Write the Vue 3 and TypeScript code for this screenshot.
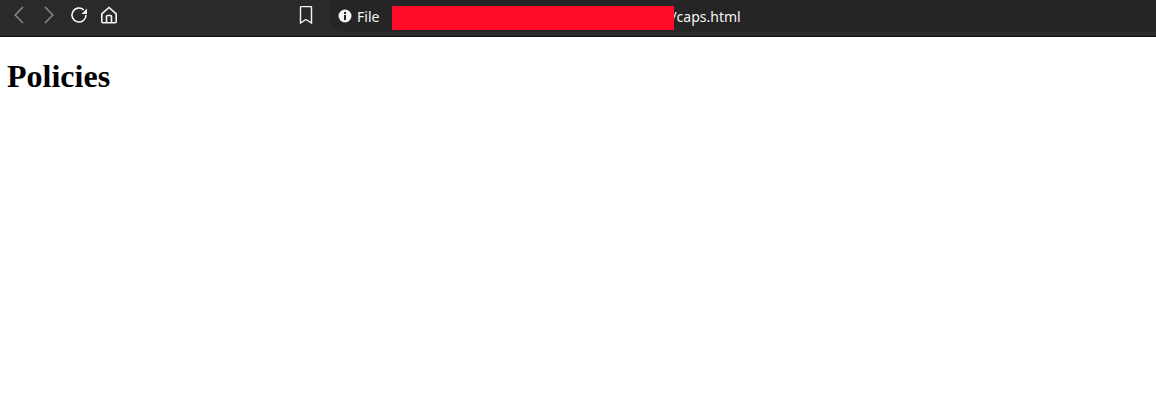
<script setup lang="ts">
const title: string = 'Policies'
</script>

<template>
  <div class="page">
    <header class="toolbar">
      <div class="nav">
        <svg class="icon dim" viewBox="0 0 18 18"><path d="M13 1 5.200 9 13 17" /></svg>
        <svg class="icon dim" viewBox="0 0 18 18"><path d="M5 1l7.800 8L5 17" /></svg>
        <svg class="icon" viewBox="0 0 18 18">
          <path d="M16 9a7 7 0 1 1-2.300-5.200" />
          <path class="solid" d="M17 2.500v5.500h-5.500z" />
        </svg>
        <svg class="icon" viewBox="0 0 18 18">
          <path d="M1.800 7.800 9 1.500l7.200 6.300v8a1 1 0 0 1-1 1H2.800a1 1 0 0 1-1-1z" />
          <path d="M6.500 16.500v-6a1 1 0 0 1 1-1h3a1 1 0 0 1 1 1v6" />
        </svg>
      </div>
      <svg class="bookmark" viewBox="0 0 18 18"><path d="M3.500 1.500a1 1 0 0 1 1-1h9a1 1 0 0 1 1 1v15.500L9 13.500 3.500 17z" /></svg>
      <div class="omnibox">
        <svg class="info" viewBox="0 0 14 14">
          <circle cx="7" cy="7" r="6.500" />
          <rect class="cut" x="6" y="6" width="2" height="5" />
          <rect class="cut" x="6" y="3" width="2" height="2" />
        </svg>
        <span class="label">File</span>
        <span class="redaction"></span>
        <span class="url">/caps.html</span>
      </div>
    </header>
    <main class="content">
      <h1>{{ title }}</h1>
    </main>
  </div>
</template>

<style scoped>
.page {
  width: 1156px;
  height: 405px;
  background: #ffffff;
  overflow: hidden;
}
.toolbar {
  box-sizing: border-box;
  height: 37px;
  background: #2a2a2a;
  border-bottom: 1px solid #0f0f0f;
  display: flex;
  align-items: flex-start;
  font-family: "Noto Sans", sans-serif;
}
.nav {
  display: flex;
  align-items: center;
  gap: 12px;
  margin: 6px 0 0 10px;
  width: 287px;
  flex: none;
}
.icon {
  width: 18px;
  height: 18px;
  fill: none;
  stroke: #f4f4f4;
  stroke-width: 1.600;
  flex: none;
}
.icon.dim {
  stroke: #858585;
}
.solid {
  fill: #f4f4f4;
  stroke: none;
}
.bookmark {
  width: 18px;
  height: 18px;
  margin-top: 6px;
  fill: none;
  stroke: #f4f4f4;
  stroke-width: 1.400;
  flex: none;
}
.omnibox {
  margin-left: 15px;
  height: 32px;
  flex: 1;
  background: #252525;
  border-radius: 0 0 0 16px;
  display: flex;
  align-items: center;
  padding-left: 8px;
  color: #f4f4f4;
  font-size: 14px;
}
.info {
  width: 14px;
  height: 14px;
  flex: none;
  fill: #f4f4f4;
}
.cut {
  fill: #252525;
}
.label {
  margin-left: 5px;
}
.redaction {
  position: relative;
  z-index: 1;
  width: 282px;
  height: 24px;
  margin: 4px 0 0 13px;
  background: #ff0a28;
  flex: none;
}
.url {
  margin-left: -3px;
}
.content {
  padding: 0 7px;
}
h1 {
  margin: 21px 0 0;
  font-family: "Liberation Serif", "Times New Roman", serif;
  font-size: 32px;
  font-weight: 700;
  line-height: 37px;
  color: #000000;
}
</style>
